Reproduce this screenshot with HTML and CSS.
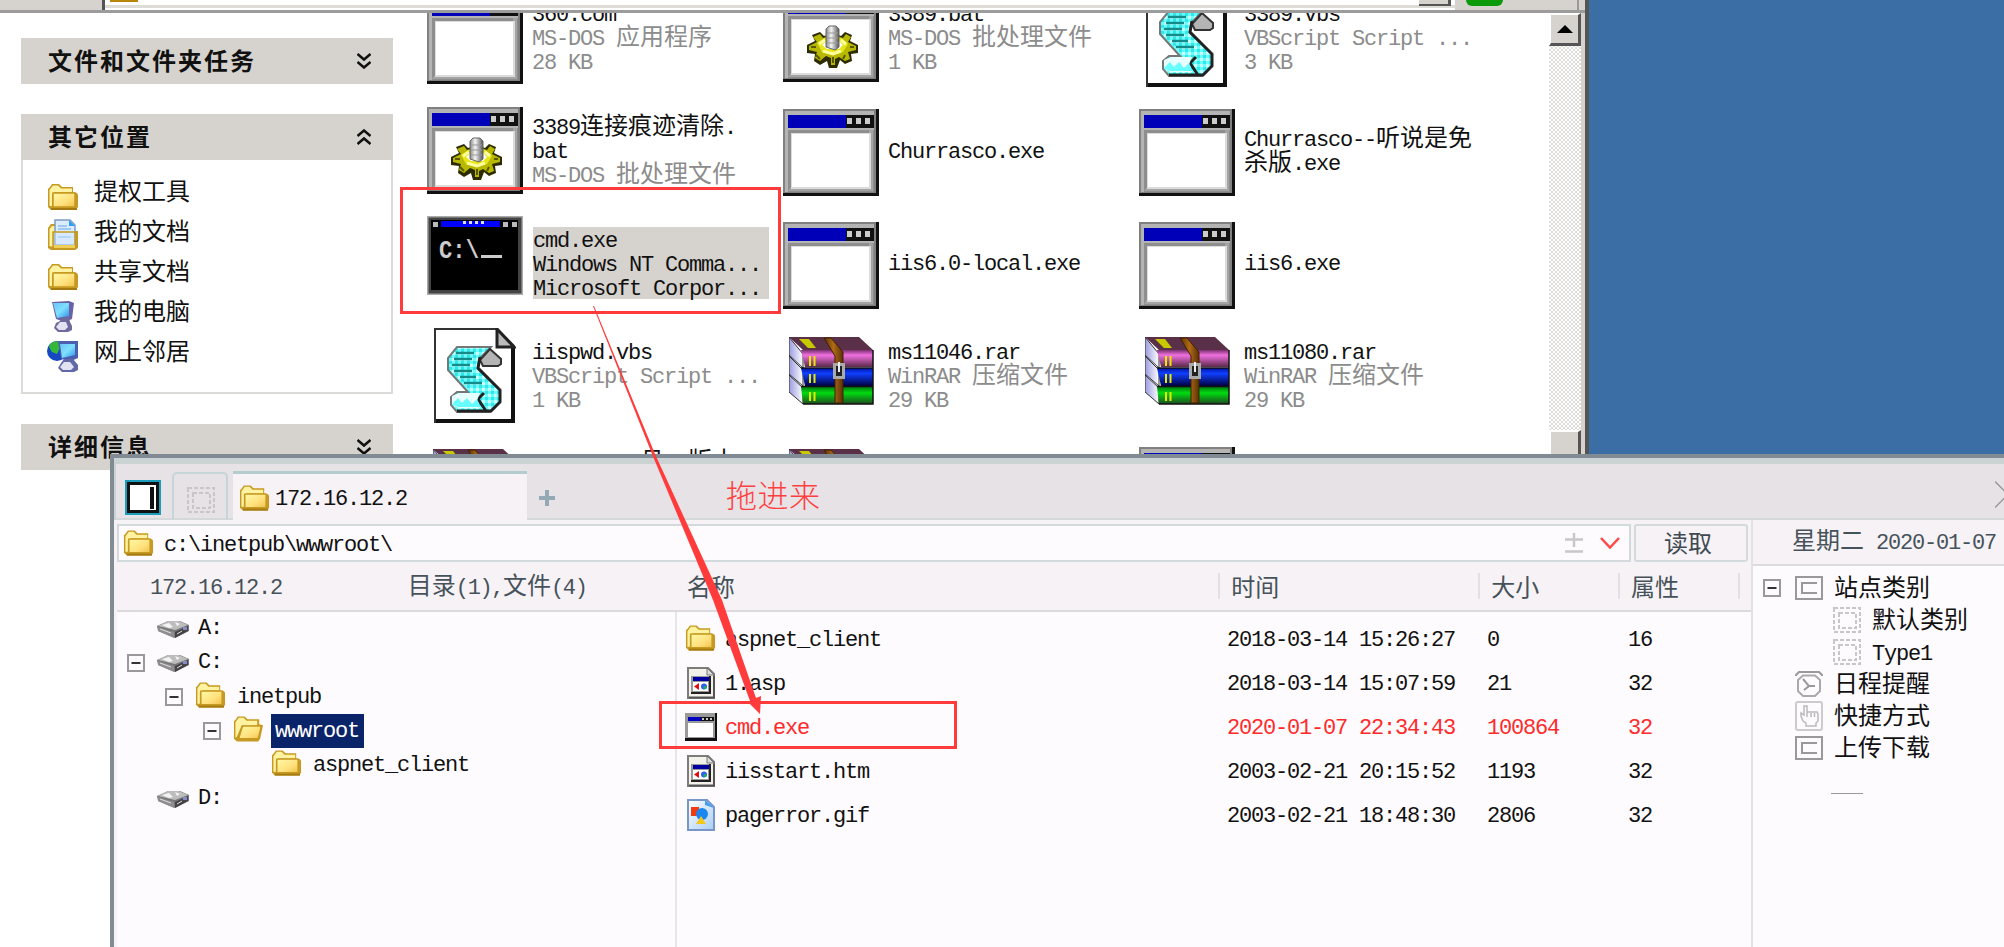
FILE: index.html
```html
<!DOCTYPE html>
<html lang="zh-CN">
<head>
<meta charset="utf-8">
<title>172.16.12.2</title>
<link rel="stylesheet" href="styles.css">
</head>
<body>
<svg class="defs" width="0" height="0">
  <defs>
    <linearGradient id="gold" x1="0" y1="0" x2="1" y2="1"><stop offset="0" stop-color="#fffaa8"/><stop offset=".6" stop-color="#ffe07c"/><stop offset="1" stop-color="#efc04c"/></linearGradient>
    <linearGradient id="screen" x1="0" y1="0" x2="1" y2="1"><stop offset="0" stop-color="#6cc4fb"/><stop offset=".5" stop-color="#7fe0ff"/><stop offset="1" stop-color="#2f8fe8"/></linearGradient>
    <linearGradient id="pink" x1="0" y1="0" x2="0" y2="1"><stop offset="0" stop-color="#7a2f6e"/><stop offset=".3" stop-color="#f070e0"/><stop offset="1" stop-color="#5a2a4a"/></linearGradient>
    <linearGradient id="blue" x1="0" y1="0" x2="0" y2="1"><stop offset="0" stop-color="#0010a0"/><stop offset=".3" stop-color="#1040ff"/><stop offset="1" stop-color="#000040"/></linearGradient>
    <linearGradient id="green" x1="0" y1="0" x2="0" y2="1"><stop offset="0" stop-color="#007a10"/><stop offset=".35" stop-color="#00dc10"/><stop offset="1" stop-color="#1f4a1f"/></linearGradient>
    <linearGradient id="strap" x1="0" y1="0" x2="1" y2="0"><stop offset="0" stop-color="#5a3208"/><stop offset=".5" stop-color="#b06a14"/><stop offset="1" stop-color="#5a3208"/></linearGradient>
    <linearGradient id="pages" x1="0" y1="0" x2="1" y2="0"><stop offset="0" stop-color="#9a9ae0"/><stop offset="1" stop-color="#ffffff"/></linearGradient>
    <linearGradient id="pic" x1="0" y1="0" x2="1" y2="1"><stop offset="0" stop-color="#ffffff"/><stop offset="1" stop-color="#a9cdf5"/></linearGradient>
    <linearGradient id="metal" x1="0" y1="0" x2="1" y2="0"><stop offset="0" stop-color="#888"/><stop offset=".4" stop-color="#f4f4f4"/><stop offset="1" stop-color="#555"/></linearGradient>
    <pattern id="cyan" width="6" height="6" patternUnits="userSpaceOnUse"><rect width="6" height="6" fill="#6ff"/><rect width="3" height="3" fill="#c8ffff"/><rect x="3" y="3" width="3" height="3" fill="#35e6e6"/></pattern>
  </defs>
  <symbol id="folder" viewBox="0 0 32 28">
    <path d="M1 24V6L3 4L5 1H12L15 4H26V9L30 10L31 12V24L29 27H4Z" fill="#c69a22"/>
    <path d="M2.500 23V7L6 2.500H11L14 5.500H25V9H8L5 11V23Z" fill="#fff2a0"/>
    <path d="M6 10H28V24H6Z" fill="url(#gold)" stroke="#c69a22" stroke-width="1.500"/>
    <path d="M4 26H30" stroke="#a57a10" stroke-width="2"/>
  </symbol>
  <symbol id="folder-open" viewBox="0 0 32 28">
    <path d="M1 24V6L3 4L5 1H12L15 4H27V9L31 10L28 24L26 27H4Z" fill="#c69a22"/>
    <path d="M2.500 23V7L6 2.500H11L14 5.500H25V10H9L4 22Z" fill="#fff2a0"/>
    <path d="M10 11H29L26 24H6Z" fill="url(#gold)" stroke="#c69a22" stroke-width="1.200"/>
  </symbol>
  <symbol id="docs" viewBox="0 0 32 32">
    <path d="M1 29V9L4 5H9V12H31V29L28 31H4Z" fill="#c69a22"/>
    <path d="M2.500 27V10L5 7H9V14H6V28Z" fill="#fff2a0"/>
    <path d="M8 1H23L28 6V26H8Z" fill="#dcecff" stroke="#7a9cc8" stroke-width="1.500"/>
    <path d="M22 1L28 7H22Z" fill="#2f9cf5"/>
    <path d="M11 7H20M11 10H24M11 18H24" stroke="#8cbcf2" stroke-width="1.500"/>
    <path d="M6 13H28V28H6Z" fill="#cfe6ff" fill-opacity=".45" stroke="#c69a22" stroke-width="1.500"/>
    <path d="M7 26H28V29H7Z" fill="#f0cf58"/>
  </symbol>
  <symbol id="computer" viewBox="0 0 24 33">
    <path d="M1 2L18 1L23 3L21 19L14 22L5 19Z" fill="#6a62a8"/>
    <path d="M2 3L18 3L18 16L6 18Z" fill="url(#screen)"/>
    <path d="M10 18L18 17L19 22L21 26V30L17 32H7L3 28L5 23L9 21Z" fill="#6f6a9c"/>
    <path d="M9 22H15L17 27L14 30H8L5 27Z" fill="#e2e2f2"/>
  </symbol>
  <symbol id="network" viewBox="0 0 32 33">
    <circle cx="10" cy="11" r="10" fill="#1748c4"/>
    <path d="M3 4Q8 0 14 2L13 8L10 14L5 12L2 7Z" fill="#35b838"/>
    <path d="M11 1H31V18L24 21L14 19Z" fill="#4a5fb0"/>
    <path d="M13 4H28V15L15 18Z" fill="url(#screen)"/>
    <path d="M17 19H26L31 25V30L27 32H15L11 28L14 23Z" fill="#6068a8"/>
    <path d="M17 22H23L27 27L24 30H16L13 27Z" fill="#e2e2f2"/>
  </symbol>
  <symbol id="window" viewBox="0 0 96 87">
    <rect width="96" height="87" fill="#111"/>
    <rect width="93" height="84" fill="#808080"/>
    <rect x="2" y="2" width="89" height="81" fill="#b4b4b4"/>
    <rect x="5" y="6" width="86" height="13" fill="#0000b8"/>
    <rect x="63" y="6" width="28" height="13" fill="#111"/>
    <path d="M64 9h5v6h-5zM73 9h5v6h-5zM82 9h5v6h-5z" fill="#ccc"/>
    <rect x="5" y="21" width="86" height="62" fill="#8e8e8e"/>
    <path d="M90 21V82H5L8 78H86V21Z" fill="#a4a4a4"/>
    <rect x="8" y="24" width="80" height="56" fill="#dcdcdc"/>
    <rect x="9" y="25" width="77" height="53" fill="#fff"/>
  </symbol>
  <symbol id="batch" viewBox="0 0 96 87">
    <use href="#window" width="96" height="87"/>
    <path d="M29 40L37 37L41 41L47 39H53L58 41L62 37L69 40L67 46L75 50V58L68 59L69 66L62 69L57 65L54 73H46L44 66L37 70L31 66L32 59L24 58V50L32 46Z" fill="#2c2c00"/>
    <path d="M30 42L37 39L40 43L46 41H54L60 43L63 39L68 42L65 47L73 51V55L65 57L67 64L62 66L56 62L52 64V70H48V63L43 61L37 66L32 63L34 57L26 55V51L34 47Z" fill="#b8b800"/>
    <path d="M34 48L41 43H58L65 49L60 57L50 60L39 57Z" fill="#e6e61a"/>
    <path d="M36 49L42 45M63 49L58 45M40 56L50 59L58 56" fill="none" stroke="#ffffa0" stroke-width="3"/>
    <path d="M39 50L44 46H56L60 50L56 54H44Z" fill="#fff"/>
    <path d="M33 60L37 64M62 60L60 64M50 62V68M28 52H33M67 52H71" stroke="#5a5a00" stroke-width="2"/>
    <path d="M43 34L46 31H53L56 34V52L52 55L43 52Z" fill="url(#metal)" stroke="#666"/>
    <path d="M44 38H55M44 43H55M44 48H55" stroke="#999"/>
  </symbol>
  <symbol id="console" viewBox="0 0 96 79">
    <rect width="96" height="79" fill="#aaa"/>
    <rect x="1.500" y="1.500" width="93" height="76" fill="#444"/>
    <rect x="4" y="4" width="87" height="70" fill="#000"/>
    <rect x="14" y="5" width="59" height="6" fill="#0000ff"/>
    <path d="M6 6h5v5H6zM76 6h5v5h-5zM85 6h5v5h-5z" fill="#bbb"/>
    <path d="M36 5h3v3h-3zM42 5h3v3h-3zM48 5h3v3h-3zM54 5h3v3h-3z" fill="#ddd"/>
    <text x="12" y="42" class="console-text" textLength="40" lengthAdjust="spacingAndGlyphs">C:\</text>
    <rect x="54" y="39" width="21" height="3" fill="#ccc"/>
  </symbol>
  <symbol id="script" viewBox="0 0 82 96">
    <path d="M1 1H63L80 18V94H1Z" fill="#fff" stroke="#333" stroke-width="2"/>
    <path d="M79 20V93H2" fill="none" stroke="#111" stroke-width="4"/>
    <path d="M63 1L80 19H63Z" fill="#bbb" stroke="#222" stroke-width="3"/>
    <path d="M23 19H57L47 29L45 33L44 41L66 62V74L56 84H23L17 77V69L23 64H34L14 42V30Z" fill="url(#cyan)" stroke="#777" stroke-width="2"/>
    <path d="M22 25H40M20 31H38M18 37H36M20 43H38M26 49H42M30 55H48" stroke="#158a8a" stroke-width="2.500"/>
    <path d="M56 21L67 31V36L64 38H49L46 32Z" fill="#b4b4b4" stroke="#333" stroke-width="2"/>
    <path d="M46 29L44 40L66 62V74L57 83H23M44 71L52 83M44 71L50 65" fill="none" stroke="#222" stroke-width="3"/>
    <path d="M18 68L25 65H46L43 72L46 80H24L18 76Z" fill="#e8ffff"/>
    <path d="M18 76L24 70L28 75L33 70L38 76L43 71L46 79H24Z" fill="#6ff"/>
  </symbol>
  <symbol id="rar" viewBox="0 0 85 69">
    <path d="M0 1L14 18V32L0 19ZM0 20L14 34V50L0 38ZM0 39L14 52V68L0 56Z" fill="url(#pages)" stroke="#333"/>
    <path d="M0 1H70L84 14H14Z" fill="#5a3048"/>
    <path d="M10 3H20L27 12H19Z" fill="#c8c800"/>
    <path d="M12 14H84V31H16Z" fill="url(#pink)"/>
    <path d="M12 32H84V50H16Z" fill="url(#blue)"/>
    <path d="M12 51H84V68H14Z" fill="url(#green)"/>
    <path d="M12 32H84M12 50.500H84M14 68H84V14" fill="none" stroke="#111" stroke-width="1.500"/>
    <path d="M21 20V30M25.500 20V30M21 38V47M25.500 38V47M21 56V65M25.500 56V65" stroke="#e8e800" stroke-width="2"/>
    <path d="M35 2H42L54 16V67H46V20Z" fill="url(#strap)" stroke="#402000"/>
    <rect x="45.500" y="28.500" width="9" height="13" fill="#222" stroke="#aaa" stroke-width="3"/>
    <path d="M50 26V36" stroke="#eee" stroke-width="2"/>
  </symbol>
  <symbol id="drive" viewBox="0 0 32 19">
    <path d="M0 6L11 1L23 1L32 5V11L18 18L1 11Z" fill="#777"/>
    <path d="M1 6L11 1H22L31 5L18 10Z" fill="#bdbdbd"/>
    <path d="M5 5L12 3L16 7L12 8ZM18 2L23 4L20 6Z" fill="#f4f4f4"/>
    <path d="M1 7L17 12V18L1 11Z" fill="#8e8e8e"/>
    <path d="M18 12L31 6V11L18 18Z" fill="#444"/>
    <path d="M20 14L25 11M3 9L14 13" stroke="#ddd"/>
    <rect x="26" y="7" width="4" height="3" fill="#8888cc"/>
  </symbol>
  <symbol id="page" viewBox="0 0 28 32">
    <path d="M1 1H21L27 7V31H1Z" fill="#f2f2ea" stroke="#7c7c7c" stroke-width="2"/>
    <path d="M20 1L27 8H20Z" fill="#ddd" stroke="#777"/>
    <path d="M2 30.500H27V9" fill="none" stroke="#555" stroke-width="2"/>
    <rect x="4" y="9" width="20" height="18" fill="#222"/>
    <rect x="4" y="9" width="18" height="16" fill="#999"/>
    <rect x="6" y="10" width="16" height="4" fill="#0000a0"/>
    <rect x="6" y="15" width="15" height="9" fill="#fff"/>
    <path d="M7 19.500L12 16V23Z" fill="#e01010"/>
    <circle cx="17" cy="19.500" r="3" fill="#2a62e8"/><circle cx="18" cy="20.500" r="1.500" fill="#20b060"/>
  </symbol>
  <symbol id="picture" viewBox="0 0 28 32">
    <path d="M1 1H20L27 8V31H1Z" fill="url(#pic)" stroke="#7797c8" stroke-width="2"/>
    <path d="M18 1L27 9L18 6Z" fill="#3f9cf0"/>
    <rect x="4" y="8" width="8" height="9" fill="#f03c10"/>
    <circle cx="15" cy="15" r="6" fill="#1c86f0"/>
    <path d="M14 17L19 25H9Z" fill="#f2c81a"/>
  </symbol>
  <symbol id="app" viewBox="0 0 32 28">
    <rect width="32" height="28" fill="#111"/>
    <rect x="0" y="0" width="30" height="25" fill="#999"/>
    <rect x="3" y="4" width="26" height="4" fill="#0000c0"/>
    <path d="M16 4H29V8H16Z" fill="#111"/>
    <path d="M17 5h2v2h-2zM21 5h2v2h-2zM25 5h2v2h-2z" fill="#ccc"/>
    <rect x="3" y="10" width="25" height="14" fill="#fff"/>
  </symbol>
  <symbol id="minus" viewBox="0 0 18 18">
    <rect x="1" y="1" width="16" height="16" fill="#fefbfe" stroke="#999" stroke-width="2"/>
    <path d="M4.500 9H13.500" stroke="#333" stroke-width="2"/>
  </symbol>
  <symbol id="site" viewBox="0 0 28 24">
    <rect x="1" y="1" width="26" height="22" fill="none" stroke="#999" stroke-width="2"/>
    <path d="M22 7H7V17H22" fill="none" stroke="#999" stroke-width="2"/>
  </symbol>
  <symbol id="dashed" viewBox="0 0 28 26">
    <rect x="1" y="1" width="26" height="24" fill="none" stroke="#c8c6c8" stroke-width="2" stroke-dasharray="4 2"/>
    <rect x="6" y="6" width="17" height="15" fill="none" stroke="#c8c6c8" stroke-width="2" stroke-dasharray="4 2"/>
  </symbol>
  <symbol id="clock" viewBox="0 0 28 26">
    <path d="M1 5V4L4 1H24L27 4V5" fill="none" stroke="#999" stroke-width="2"/>
    <path d="M8 4.500H20L25 9V20L20 25H8L3 20V9Z" fill="none" stroke="#aaa" stroke-width="2"/>
    <path d="M8 8L14 15L9 19M14 15H20" fill="none" stroke="#999" stroke-width="2"/>
  </symbol>
  <symbol id="hand" viewBox="0 0 28 30">
    <rect x="1" y="1" width="26" height="28" rx="2" fill="none" stroke="#ccc" stroke-width="2"/>
    <path d="M8 20L6 15V12L9 14V5H12V11H22L23 13V20L21 22V25H11V22ZM12 11V16M16 12V16M19.500 12V16" fill="none" stroke="#bbb" stroke-width="1.500"/>
  </symbol>
  <symbol id="chevrons" viewBox="0 0 14 16">
    <path d="M0.500 1L7 6.500L13.500 1M0.500 9L7 14.500L13.500 9" fill="none" stroke="#111" stroke-width="2.500"/>
  </symbol>
</svg>

<main class="desktop">
  <section class="explorer">
    <header class="toolbar">
      <div class="toolbar-label"></div>
      <div class="toolbar-address"><span class="address-folder"></span><span class="address-drop"></span></div>
      <div class="toolbar-go"><span class="go-button"></span></div>
    </header>
    <div class="explorer-body">
      <aside class="sidebar">
        <div class="panel"><h2 class="panel-title">文件和文件夹任务<svg class="chev"><use href="#chevrons"/></svg></h2></div>
        <div class="panel panel-open">
          <h2 class="panel-title">其它位置<svg class="chev chev-up"><use href="#chevrons"/></svg></h2>
          <ul class="places">
            <li><svg class="i-place"><use href="#folder"/></svg>提权工具</li>
            <li><svg class="i-place i-docs"><use href="#docs"/></svg>我的文档</li>
            <li><svg class="i-place"><use href="#folder"/></svg>共享文档</li>
            <li><svg class="i-place i-tall"><use href="#computer"/></svg>我的电脑</li>
            <li><svg class="i-place i-tall"><use href="#network"/></svg>网上邻居</li>
          </ul>
        </div>
        <div class="panel"><h2 class="panel-title">详细信息<svg class="chev"><use href="#chevrons"/></svg></h2></div>
      </aside>
      <div class="files-view">
        <div class="files">
          <div class="file"><span class="thumb"><svg class="i-window low"><use href="#window"/></svg></span><p>360.com<br><em>MS-DOS <i>应用程序</i><br>28 KB</em></p></div>
          <div class="file"><span class="thumb"><svg class="i-window"><use href="#batch"/></svg></span><p>3389.bat<br><em>MS-DOS <i>批处理文件</i><br>1 KB</em></p></div>
          <div class="file"><span class="thumb"><svg class="i-script low"><use href="#script"/></svg></span><p>3389.vbs<br><em>VBScript Script ...<br>3 KB</em></p></div>

          <div class="file"><span class="thumb"><svg class="i-window"><use href="#batch"/></svg></span><p>3389<i>连接痕迹清除</i>.<br>bat<br><em>MS-DOS <i>批处理文件</i></em></p></div>
          <div class="file"><span class="thumb"><svg class="i-window low"><use href="#window"/></svg></span><p>Churrasco.exe</p></div>
          <div class="file"><span class="thumb"><svg class="i-window low"><use href="#window"/></svg></span><p>Churrasco--<i>听说是免</i><br><i>杀版</i>.exe</p></div>

          <div class="file"><span class="thumb"><svg class="i-console"><use href="#console"/></svg></span><p class="picked">cmd.exe<br>Windows NT Comma...<br>Microsoft Corpor...</p></div>
          <div class="file"><span class="thumb"><svg class="i-window low"><use href="#window"/></svg></span><p>iis6.0-local.exe</p></div>
          <div class="file"><span class="thumb"><svg class="i-window low"><use href="#window"/></svg></span><p>iis6.exe</p></div>

          <div class="file"><span class="thumb"><svg class="i-script"><use href="#script"/></svg></span><p>iispwd.vbs<br><em>VBScript Script ...<br>1 KB</em></p></div>
          <div class="file"><span class="thumb"><svg class="i-rar"><use href="#rar"/></svg></span><p>ms11046.rar<br><em>WinRAR <i>压缩文件</i><br>29 KB</em></p></div>
          <div class="file"><span class="thumb"><svg class="i-rar"><use href="#rar"/></svg></span><p>ms11080.rar<br><em>WinRAR <i>压缩文件</i><br>29 KB</em></p></div>

          <div class="file"><span class="thumb"><svg class="i-rar"><use href="#rar"/></svg></span><p class="indent"><i>月</i>--<i>版本</i><br><br>&nbsp;</p></div>
          <div class="file"><span class="thumb"><svg class="i-rar"><use href="#rar"/></svg></span></div>
          <div class="file"><span class="thumb"><svg class="i-window low"><use href="#window"/></svg></span></div>
        </div>
      </div>
      <div class="scrollbar">
        <div class="scroll-up"><svg width="16" height="8"><path d="M0 8L8 0L16 8Z" fill="#000"/></svg></div>
        <div class="scroll-thumb"></div>
      </div>
    </div>
  </section>

  <section class="manager">
    <header class="tabs">
      <div class="toggle"><span></span></div>
      <div class="tab tab-empty"><svg class="i-dashed"><use href="#dashed"/></svg></div>
      <div class="tab tab-active"><svg class="i-folder"><use href="#folder"/></svg><span class="tab-text">172.16.12.2</span></div>
      <div class="tab-rest">
        <svg class="plus" width="16" height="16"><path d="M8 0V16M0 8H16" stroke="#93a9b4" stroke-width="4"/></svg>
        <svg class="close" width="9" height="27"><path d="M0 0.500L13 13.500L0 26.500" fill="none" stroke="#999" stroke-width="1.500"/></svg>
      </div>
    </header>
    <div class="panes">
      <div class="main-pane">
        <div class="address-row">
          <div class="address"><svg class="i-folder"><use href="#folder"/></svg><span class="path">c:\inetpub\wwwroot\</span>
            <svg class="pm" width="18" height="20"><path d="M0 6.500H18M9 0V14M0 18.500H18" stroke="#c8c8c8" stroke-width="2.500"/></svg>
            <svg width="20" height="12"><path d="M1 1L10 10.500L19 1" fill="none" stroke="#ff4848" stroke-width="2.500"/></svg>
          </div>
          <button class="read" type="button">读取</button>
        </div>
        <div class="head-row">
          <span class="h-host">172.16.12.2</span>
          <span class="h-count"><i>目录</i>(1),<i>文件</i>(4)</span>
          <span class="h-name zh">名称</span><span class="h-time zh tick">时间</span><span class="h-size zh tick">大小</span><span class="h-attr zh tick">属性</span><span class="h-end tick"></span>
        </div>
        <div class="split">
          <ul class="tree">
            <li class="lv0"><span class="exp"></span><svg class="i-drive"><use href="#drive"/></svg>A:</li>
            <li class="lv0"><svg class="exp"><use href="#minus"/></svg><svg class="i-drive"><use href="#drive"/></svg>C:</li>
            <li class="lv1"><svg class="exp"><use href="#minus"/></svg><svg class="i-folder"><use href="#folder"/></svg><span class="node">inetpub</span></li>
            <li class="lv2"><svg class="exp"><use href="#minus"/></svg><svg class="i-folder"><use href="#folder-open"/></svg><span class="node selected">wwwroot</span></li>
            <li class="lv3"><span class="exp"></span><svg class="i-folder"><use href="#folder"/></svg><span class="node">aspnet_client</span></li>
            <li class="lv0"><span class="exp"></span><svg class="i-drive"><use href="#drive"/></svg>D:</li>
          </ul>
          <div class="list">
            <div class="row"><svg class="i-row"><use href="#folder"/></svg><span>aspnet_client</span><span>2018-03-14 15:26:27</span><span>0</span><span>16</span></div>
            <div class="row"><svg class="i-row i-page"><use href="#page"/></svg><span>1.asp</span><span>2018-03-14 15:07:59</span><span>21</span><span>32</span></div>
            <div class="row red"><svg class="i-row i-app"><use href="#app"/></svg><span>cmd.exe</span><span>2020-01-07 22:34:43</span><span>100864</span><span>32</span></div>
            <div class="row"><svg class="i-row i-page"><use href="#page"/></svg><span>iisstart.htm</span><span>2003-02-21 20:15:52</span><span>1193</span><span>32</span></div>
            <div class="row"><svg class="i-row i-page"><use href="#picture"/></svg><span>pagerror.gif</span><span>2003-02-21 18:48:30</span><span>2806</span><span>32</span></div>
          </div>
        </div>
      </div>
      <aside class="right-pane">
        <div class="date"><i>星期二</i> 2020-01-07</div>
        <ul class="menu">
          <li><svg class="exp"><use href="#minus"/></svg><svg class="m-site"><use href="#site"/></svg><i>站点类别</i></li>
          <li class="sub"><svg class="m-dash"><use href="#dashed"/></svg><i>默认类别</i></li>
          <li class="sub"><svg class="m-dash"><use href="#dashed"/></svg><span class="type">Type1</span></li>
          <li><span class="exp"></span><svg class="m-dash"><use href="#clock"/></svg><i>日程提醒</i></li>
          <li><span class="exp"></span><svg class="m-hand"><use href="#hand"/></svg><i>快捷方式</i></li>
          <li><span class="exp"></span><svg class="m-site"><use href="#site"/></svg><i>上传下载</i></li>
        </ul>
        <div class="rule"></div>
      </aside>
    </div>
  </section>

  <svg class="marks" width="2004" height="947">
    <rect x="401.500" y="188.500" width="378" height="124" fill="none" stroke="#ff3b3b" stroke-width="3"/>
    <rect x="660.500" y="702.500" width="295" height="45" fill="none" stroke="#ff3b3b" stroke-width="3"/>
    <path d="M593 306H594L655 454L722 600L756 698L761 696L760 714L748 702L750 701L713 600L652 454Z" fill="#ff3b3b"/>
  </svg>
  <div class="note">拖进来</div>
</main>
</body>
</html>
```
FILE: styles.css
```css
* { box-sizing: border-box; }

body {
  margin: 0;
  font: 22px/24px "Liberation Mono", "Noto Sans CJK SC", monospace;
  letter-spacing: -1.2px;
  color: #111;
}

ul, h2, p { margin: 0; padding: 0; }
li { list-style: none; }
svg { display: block; flex: none; }
em { font-style: normal; }

/* Chinese runs sit on a 24px grid, Latin characters on a 12px one */
i, .zh {
  font: normal 24px/0 "Noto Sans CJK SC", sans-serif;
  letter-spacing: 0;
}

.defs { position: absolute; }
.console-text { font: bold 25px "Liberation Mono", monospace; fill: #ccc; letter-spacing: 0; }

.desktop {
  position: relative;
  width: 2004px;
  height: 947px;
  overflow: hidden;
  background: linear-gradient(to right, #fff 1500px, #3a6ea5 1500px);
}

/* file explorer window */
.explorer {
  position: absolute;
  left: 0;
  top: 0;
  width: 1589px;
  height: 947px;
  background: #fff;
  border-right: 4px solid #555;
}
.toolbar {
  display: flex;
  height: 13px;
  background: #d6d3ce;
  border-bottom: 3px solid #9c9c9c;
}
.toolbar-label { width: 102px; }
.toolbar-address {
  display: flex;
  justify-content: space-between;
  width: 1353px;
  border-left: 3px solid #555;
  background: linear-gradient(#fff 5px, #dedcd6 5px, #dedcd6 8px, #fff 8px);
}
.address-folder { width: 28px; height: 2px; margin-left: 5px; background: #b8860b; }
.address-drop { width: 32px; height: 6px; margin-right: 4px; background: #d6d3ce; border: solid #555; border-width: 0 3px 2px 0; }
.toolbar-go { flex: 1; margin-right: 6px; border-right: 2px solid #999; }
.go-button { display: block; width: 37px; height: 6px; margin-left: 11px; background: #0a9a0a; border-radius: 0 0 6px 6px; }

.explorer-body { display: flex; height: 934px; }
.sidebar { width: 427px; padding: 25px 34px 0 21px; }
.panel { margin-bottom: 30px; }
.panel-title {
  display: flex;
  align-items: center;
  justify-content: space-between;
  height: 46px;
  padding: 0 22px 2px 27px;
  background: #d6d3ce;
  font: bold 24px/32px "Noto Sans CJK SC", sans-serif;
  letter-spacing: 2px;
}
.chev { width: 14px; height: 16px; margin-top: 2px; }
.chev-up { transform: rotate(180deg); }
.places { height: 234px; padding: 10px 0 0 24px; border: 2px solid #dddbd8; border-top: 0; }
.places li {
  display: flex;
  align-items: center;
  gap: 15px;
  height: 40px;
  font: 24px/32px "Noto Sans CJK SC", sans-serif;
  letter-spacing: 0;
}
.i-place { width: 32px; height: 28px; margin-top: 14px; }
.i-docs { height: 32px; margin-top: 10px; }
.i-tall { height: 33px; margin-top: 13px; }

.files-view { width: 1122px; overflow: hidden; }
.files {
  display: grid;
  grid-template-columns: repeat(3, 356px);
  grid-auto-rows: 112.5px;
  margin-top: -31px;
}
.file { display: flex; align-items: center; gap: 9px; white-space: pre; }
.file p { padding-top: 4px; }
.file em { color: #8c8c8c; }
.file .picked { width: 236px; margin-left: 1px; background: #d6d3ce; padding-top: 3px; height: 72px; }
.file .indent { padding: 0 0 0 108px; }
.thumb { display: flex; justify-content: center; width: 96px; }
.low { margin-top: 4px; }
.i-window { width: 96px; height: 87px; }
.i-script { width: 82px; height: 96px; }
.i-rar { width: 85px; height: 69px; margin-top: -11px; }
.i-console { width: 96px; height: 79px; margin-top: -15px; }

.scrollbar {
  display: flex;
  flex-direction: column;
  width: 32px;
  background: repeating-conic-gradient(#fff 0 25%, #dedcd8 0 50%) 0 0 / 4px 4px;
  outline: 4px solid #d6d3ce;
  clip-path: inset(0 -4px 0 0);
}
.scroll-up, .scroll-thumb {
  background: #d6d3ce;
  border: solid;
  border-width: 2px 3px 3px 2px;
  border-color: #fff #555 #555 #fff;
}
.scroll-up { display: flex; align-items: center; justify-content: center; height: 33px; }
.scroll-thumb { height: 120px; margin-top: 384px; }

/* remote file manager window */
.manager {
  position: absolute;
  left: 110px;
  top: 454px;
  width: 1894px;
  height: 493px;
  border: solid #808b93;
  border-width: 4px 0 0 4px;
  background: #f6f2f6;
}
.tabs {
  display: flex;
  align-items: flex-end;
  height: 62px;
  border-top: 6px solid #cbd2d4;
  border-left: 2px solid #cbd2d4;
  background: linear-gradient(#e7e2e6 54px, #d3d8da 54px);
}
.toggle {
  display: flex;
  justify-content: flex-end;
  width: 36px;
  height: 35px;
  margin: 0 11px 5px 9px;
  padding: 0 3px;
  background: #fff;
  border: 2px solid #1a9cba;
  box-shadow: inset 0 0 0 3px #111;
}
.toggle span { width: 4px; height: 22px; margin: 5px 2px; background: #111; }
.tab { display: flex; align-items: center; }
.tab-empty {
  width: 56px;
  height: 47px;
  margin-bottom: 1px;
  padding: 6px 0 0 13px;
  border: 2px solid #c5d5d8;
  border-bottom: 0;
  border-radius: 5px 5px 0 0;
}
.i-dashed { width: 28px; height: 28px; }
.tab-active {
  width: 294px;
  height: 49px;
  margin-left: 5px;
  padding: 2px 0 0 6px;
  gap: 5px;
  border-top: 3px solid #b3cccd;
  background: #f6f2f6;
}
.tab-text { padding-top: 4px; }
.i-folder { width: 31px; height: 28px; }
.tab-rest { flex: 1; display: flex; justify-content: space-between; align-items: flex-start; height: 39px; }
.plus { margin: 9px 0 0 12px; }

.panes { display: flex; height: 427px; }
.main-pane { width: 1639px; padding-left: 3px; border-right: 2px solid #e2e2e6; }
.address-row { display: flex; gap: 3px; padding-top: 4px; height: 42px; }
.address {
  display: flex;
  align-items: center;
  width: 1514px;
  padding: 0 9px 0 4px;
  border: 2px solid #d3dadd;
  background: #fefbfe;
}
.path { flex: 1; padding: 5px 0 0 10px; }
.pm { margin-right: 17px; }
.read {
  width: 114px;
  padding: 0 6px 3px 0;
  border: 2px solid #d3dadd;
  border-radius: 3px;
  background: #f6f2f6;
  color: #3f4a52;
  font: 24px/30px "Noto Sans CJK SC", sans-serif;
}
.head-row {
  display: flex;
  align-items: center;
  height: 50px;
  border-bottom: 2px solid #dcdade;
  color: #46525a;
}
.head-row > span { line-height: 26px; }
.head-row .zh { line-height: 26px; margin-top: -1px; }
.h-host { width: 291px; padding: 5px 0 0 33px; }
.h-count { width: 279px; padding-top: 6px; letter-spacing: -1.4px; }
.h-name { width: 532px; }
.tick { height: 26px; border-left: 2px solid #e2e0e4; padding-left: 11px; }
.h-time { width: 260px; }
.h-size { width: 140px; }
.h-attr { width: 120px; }

.split { display: flex; height: 335px; background: #fefbfe; }
.tree { width: 560px; border-right: 2px solid #e6e6ea; }
.tree li { display: flex; align-items: center; height: 34px; }
.exp { width: 18px; height: 18px; flex: none; }
.lv0 { padding-left: 10px; }
.lv1 { padding-left: 48px; }
.lv2 { padding-left: 86px; }
.lv3 { padding-left: 124px; }
.i-drive { width: 32px; height: 19px; margin: 0 9px 0 12px; }
.tree .i-folder { margin: -4px 7px 0 12px; }
.node { padding: 6px 5px 4px 4px; }
.selected { background: #0a246a; color: #fff; }
.list { padding: 6px 0 0 8px; }
.row {
  display: grid;
  grid-template-columns: 40px 502px 260px 141px 60px;
  align-items: center;
  height: 44px;
}
.row span { padding-top: 2px; }
.row.red { color: #ff2a2a; }
.i-row { width: 31px; height: 28px; margin-top: -4px; }
.i-page { width: 28px; height: 32px; margin: -2px 0 0 2px; }
.i-app { width: 32px; height: 28px; margin-top: -2px; }

.right-pane { flex: 1; background: #fefbfe; }
.date { height: 46px; padding: 12px 0 0 39px; border-bottom: 2px solid #dcdade; background: #f6f2f6; color: #46525a; white-space: pre; }
.menu { padding: 6px 0 0 10px; }
.menu li { display: flex; align-items: center; height: 32px; }
.menu i { line-height: 30px; margin-top: -4px; }
.menu .exp { margin-right: 14px; }
.menu .m-site, .menu .m-dash, .menu .m-hand { width: 28px; margin-right: 11px; }
.m-site { height: 24px; }
.m-dash { height: 26px; }
.m-hand { height: 30px; }
.menu .sub { padding-left: 70px; }
.type { padding-top: 5px; }
.rule { width: 32px; height: 1px; margin: 29px 0 0 78px; background: #999; }

/* annotations over both windows */
.marks { position: absolute; left: 0; top: 0; }
.note {
  position: absolute;
  left: 726px;
  top: 473px;
  font: 300 31px/42px "Noto Sans CJK SC", sans-serif;
  letter-spacing: 0.5px;
  color: #ff4040;
}
```
